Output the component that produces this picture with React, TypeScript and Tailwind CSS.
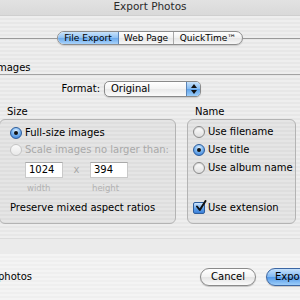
import React from "react";

const stripes =
  "bg-[repeating-linear-gradient(180deg,#eeeeee_0px,#eeeeee_2px,#e7e7e7_2px,#e7e7e7_4px)]";

function Radio({ on, disabled }: { on?: boolean; disabled?: boolean }) {
  if (on) {
    return (
      <span className="w-[12px] h-[12px] rounded-full border border-[#2d5d9c] bg-[radial-gradient(circle_at_50%_30%,#e2f1ff_0%,#7db7f0_45%,#2f74d2_100%)] flex items-center justify-center shrink-0">
        <span className="w-[4px] h-[4px] rounded-full bg-[#111]" />
      </span>
    );
  }
  return (
    <span
      className={
        disabled
          ? "w-[12px] h-[12px] rounded-full border border-[#c4c4c4] bg-[linear-gradient(180deg,#fafafa,#e8e8e8)] shrink-0"
          : "w-[12px] h-[12px] rounded-full border border-[#8a8a8a] bg-[linear-gradient(180deg,#ffffff,#dedede)] shadow-[inset_0_1px_1px_rgba(0,0,0,0.15)] shrink-0"
      }
    />
  );
}

function Check() {
  return (
    <span className="w-[12px] h-[12px] rounded-[2px] border border-[#2d5d9c] bg-[linear-gradient(180deg,#d2e8ff,#5d9ee8_60%,#3a7fd8)] relative shrink-0">
      <svg viewBox="0 0 12 12" className="absolute left-[1px] top-[-3px] w-[12px] h-[12px]">
        <path d="M2 6.5 L4.8 10 L10.5 1" fill="none" stroke="#111" strokeWidth="2" strokeLinecap="round" strokeLinejoin="round" />
      </svg>
    </span>
  );
}

export default function App() {
  return (
    <div
      className={`w-[300px] h-[300px] overflow-hidden relative ${stripes} text-[10px] leading-none text-black font-['DejaVu_Sans',sans-serif]`}
    >
      {/* title bar */}
      <div className="h-[16px] flex items-center justify-center bg-[linear-gradient(180deg,#e2e2e2,#d9d9d9)] border-b border-[#cfcfcf] text-[10.5px] text-[#2a2a2a] pb-[2px]">
        Export Photos
      </div>

      {/* tabs */}
      <div className="mt-[15px] flex items-center h-[14px]">
        <div className="flex-1 h-px bg-[#9a9a9a]" />
        <div className="flex h-[14px] rounded-[7px] border border-[#8d8d8d] overflow-hidden text-[9px] bg-[linear-gradient(180deg,#ffffff,#f0f0f0_50%,#e6e6e6_51%,#f6f6f6)] shadow-[0_1px_1px_rgba(0,0,0,0.15)]">
          <div className="w-[61px] flex items-center justify-center bg-[linear-gradient(180deg,#c9e3fb,#8fc1f3_50%,#6aa9ec_51%,#a9d3fb)] border-r border-[#5a84b8]">
            File Export
          </div>
          <div className="w-[55px] flex items-center justify-center border-r border-[#a8a8a8]">Web Page</div>
          <div className="w-[68px] flex items-center justify-center">QuickTime™</div>
        </div>
        <div className="flex-1 h-px bg-[#9a9a9a]" />
      </div>

      {/* section header */}
      <div className="mt-[18px] ml-[-6px] h-[11px]">Images</div>
      <div className="h-px bg-[#a3a3a3]" />

      {/* format */}
      <div className="mt-[6px] flex items-center h-[16px]">
        <div className="w-[103px] text-right pr-[3px]">Format:</div>
        <div className="ml-[1px] w-[97px] h-[16px] rounded-[5px] border border-[#8a8a8a] bg-[linear-gradient(180deg,#ffffff,#f3f3f3_50%,#e9e9e9_51%,#fbfbfb)] flex overflow-hidden shadow-[0_1px_1px_rgba(0,0,0,0.15)]">
          <div className="flex-1 flex items-center pl-[6px]">Original</div>
          <div className="w-[14px] bg-[linear-gradient(180deg,#c8e2fb,#84bbf2_50%,#5ea2ea_51%,#9ccdf9)] border-l border-[#5a84b8] flex flex-col items-center justify-center gap-[2px]">
            <svg width="6" height="4" viewBox="0 0 6 4"><path d="M0 4 L3 0 L6 4Z" fill="#111" /></svg>
            <svg width="6" height="4" viewBox="0 0 6 4"><path d="M0 0 L3 4 L6 0Z" fill="#111" /></svg>
          </div>
        </div>
      </div>

      {/* group labels */}
      <div className="mt-[9px] flex h-[12px] items-center">
        <div className="w-[187px] pl-[7px]">Size</div>
        <div className="pl-[8px]">Name</div>
      </div>

      {/* boxes */}
      <div className="mt-[1px] flex h-[105px]">
        <div className="w-[177px] ml-[-1px] rounded-[6px] border border-[#b4b4b4] bg-[rgba(0,0,0,0.035)] pl-[10px] pt-[7px] flex flex-col">
          <div className="flex items-center gap-[3px] h-[12px]">
            <Radio on />
            <span>Full-size images</span>
          </div>
          <div className="mt-[5px] flex items-center gap-[3px] h-[12px] text-[#a9a9a9]">
            <Radio disabled />
            <span className="whitespace-nowrap">Scale images no larger than:</span>
          </div>
          <div className="mt-[6px] ml-[15px] flex items-center h-[16px]">
            <div className="w-[38px] h-[16px] bg-white border border-[#c9c9c9] border-t-[#a9a9a9] flex items-center pl-[3px]">1024</div>
            <div className="w-[27px] text-center text-[#a9a9a9]">x</div>
            <div className="w-[38px] h-[16px] bg-white border border-[#c9c9c9] border-t-[#a9a9a9] flex items-center pl-[3px]">394</div>
          </div>
          <div className="mt-[6px] ml-[17px] flex text-[8.5px] text-[#b2b2b2] h-[9px]">
            <span className="w-[65px]">width</span>
            <span>height</span>
          </div>
          <div className="mt-[9px] h-[12px] flex items-center">Preserve mixed aspect ratios</div>
        </div>
        <div className="ml-[11px] w-[109px] rounded-[6px] border border-[#b4b4b4] bg-[rgba(0,0,0,0.035)] pl-[5px] pt-[6px] flex flex-col">
          <div className="flex items-center gap-[3px] h-[12px]">
            <Radio />
            <span>Use filename</span>
          </div>
          <div className="mt-[6px] flex items-center gap-[3px] h-[12px]">
            <Radio on />
            <span>Use title</span>
          </div>
          <div className="mt-[6px] flex items-center gap-[3px] h-[12px]">
            <Radio />
            <span className="whitespace-nowrap">Use album name</span>
          </div>
          <div className="mt-[28px] flex items-center gap-[3px] h-[12px]">
            <Check />
            <span>Use extension</span>
          </div>
        </div>
      </div>

      {/* bottom */}
      <div className="mt-[14px] h-[16px] border-t border-[#dcdcdc] bg-[#ebebeb]" />
      <div className="h-[46px] bg-[repeating-linear-gradient(180deg,#f4f4f4_0px,#f4f4f4_2px,#efefef_2px,#efefef_4px)] flex items-center">
        <div className="ml-[-2px] flex-1">photos</div>
        <div className="w-[56px] h-[18px] rounded-full border border-[#8a8a8a] bg-[linear-gradient(180deg,#ffffff,#f2f2f2_50%,#e4e4e4_51%,#fafafa)] flex items-center justify-center shadow-[0_1px_1px_rgba(0,0,0,0.2)]">
          Cancel
        </div>
        <div className="ml-[10px] w-[50px] mr-[-16px] h-[18px] rounded-full border border-[#3b66a3] bg-[linear-gradient(180deg,#c4e0fb,#80b8f2_50%,#5298e8_51%,#9ccdf9)] flex items-center pl-[8px] shadow-[0_1px_1px_rgba(0,0,0,0.2)]">
          Export
        </div>
      </div>
    </div>
  );
}
